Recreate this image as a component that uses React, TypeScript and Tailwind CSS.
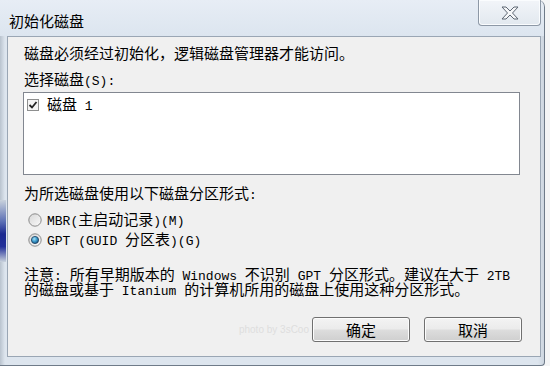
import React from "react";

function T({ s }: { s: string }) {
  const parts = s.split(/([\x20-\x7e]+)/);
  return (
    <>
      {parts.map((p, i) =>
        p === "" ? null : /^[\x20-\x7e]+$/.test(p) ? (
          <span key={i} className="font-['Liberation_Mono',monospace] text-[13px] whitespace-pre">
            {p}
          </span>
        ) : (
          <span key={i}>{p}</span>
        )
      )}
    </>
  );
}

function Radio({ checked }: { checked?: boolean }) {
  return (
    <svg width="14" height="14" viewBox="0 0 14 14">
      <defs>
        <linearGradient id={checked ? "rg1" : "rg0"} x1="0" y1="0" x2="1" y2="1">
          <stop offset="0" stopColor="#d6d6d6" />
          <stop offset="1" stopColor="#fbfbfb" />
        </linearGradient>
        <radialGradient id="dot" cx="0.4" cy="0.35" r="0.7">
          <stop offset="0" stopColor="#a8e2f8" />
          <stop offset="0.5" stopColor="#3d9ccc" />
          <stop offset="1" stopColor="#16507e" />
        </radialGradient>
      </defs>
      <circle cx="7" cy="7" r="6.2" fill={`url(#${checked ? "rg1" : "rg0"})`} stroke="#8b8b8b" strokeWidth="1" />
      {checked && <circle cx="7" cy="7" r="3.6" fill="url(#dot)" stroke="#1d3f5e" strokeWidth="0.8" />}
    </svg>
  );
}

function Btn({ label }: { label: string }) {
  return (
    <div className="w-[98px] h-[25px] rounded-[3px] border border-[#707070] bg-[linear-gradient(#f3f3f3_0%,#ebebeb_48%,#dddddd_52%,#cfcfcf_100%)] shadow-[inset_0_0_0_1px_#fcfcfc] flex items-center justify-center text-[15px] leading-none text-black">
      {label}
    </div>
  );
}

export default function App() {
  return (
    <div className="w-[550px] h-[366px] bg-[#f4f5f6] overflow-hidden font-['Noto_Sans_CJK_SC',sans-serif] text-black">
      <div className="relative w-[545px] h-[366px] rounded-tr-[7px] rounded-br-[4px] border-r border-b border-[#6f7b89] bg-[linear-gradient(90deg,#b9c3ce_0px,#dde5ee_5px,#dde5ee_538px,#c9d2dc_545px)] flex flex-col">
        {/* left glass blob */}
        <div className="absolute left-0 top-[200px] w-[6px] h-[62px] bg-[linear-gradient(#c9d2dc_0%,#5b6fb5_35%,#1a2890_55%,#22309a_75%,#c9d2dc_100%)]" />
        {/* title bar */}
        <div className="h-[36px] flex items-center pl-[9px] bg-[linear-gradient(#e7edf5,#dce5ef)] rounded-tr-[7px]">
          <span className="text-[15px] leading-[16px] mt-[5px]">初始化磁盘</span>
        </div>
        {/* close button */}
        <div className="absolute top-0 right-[3px] w-[63px] h-[26px] rounded-b-[4px] border border-t-0 border-[#8d98a6] bg-[linear-gradient(#f2f5f9,#e2e8ef)] shadow-[inset_0_0_0_1px_#fafcfe] flex items-center justify-center">
          <svg width="18" height="14" viewBox="0 0 18 14">
            <polygon
              points="1,1 5,1 9,5 13,1 17,1 11.5,7 17,13 13,13 9,9 5,13 1,13 6.5,7"
              fill="#f6f7f9"
              stroke="#5d6672"
              strokeWidth="1"
              strokeLinejoin="round"
            />
          </svg>
        </div>
        {/* client area */}
        <div className="ml-[7px] w-[534px] h-[321px] border border-[#9aa6b4] bg-[#f0f0f0] flex flex-col pl-[15px] pt-[8px]">
          <div className="pl-[1px] h-[16px] leading-[16px] text-[15px]">
            <T s="磁盘必须经过初始化，逻辑磁盘管理器才能访问。" />
          </div>
          <div className="pl-[1px] mt-[10px] h-[16px] leading-[16px] text-[15px]">
            <T s="选择磁盘(S):" />
          </div>
          <div className="mt-[5px] w-[497px] h-[83px] border border-[#828790] bg-white pt-[4px] pl-[3px]">
            <div className="flex items-center h-[16px]">
              <svg width="12" height="12" viewBox="0 0 12 12">
                <rect x="0.5" y="0.5" width="11" height="11" fill="#f4f4f4" stroke="#8e8f8f" />
                <path d="M2.5 6 L5 8.5 L9.5 3" fill="none" stroke="#222" strokeWidth="1.8" />
              </svg>
              <span className="ml-[8px] text-[15px] leading-[16px]">
                <T s="磁盘 1" />
              </span>
            </div>
          </div>
          <div className="pl-[1px] mt-[10px] h-[16px] leading-[16px] text-[15px]">
            <T s="为所选磁盘使用以下磁盘分区形式:" />
          </div>
          <div className="mt-[9px] flex flex-col pl-[5px]">
            <div className="h-[20px] flex items-center">
              <Radio />
              <span className="ml-[5px] text-[15px] leading-[16px]">
                <T s="MBR(主启动记录)(M)" />
              </span>
            </div>
            <div className="h-[20px] flex items-center">
              <Radio checked />
              <span className="ml-[5px] text-[15px] leading-[16px]">
                <T s="GPT (GUID 分区表)(G)" />
              </span>
            </div>
          </div>
          <div className="pl-[1px] mt-[16px] text-[15px]">
            <div className="h-[15px] leading-[15px] whitespace-nowrap">
              <T s="注意: 所有早期版本的 Windows 不识别 GPT 分区形式。建议在大于 2TB" />
            </div>
            <div className="h-[15px] leading-[15px] whitespace-nowrap">
              <T s="的磁盘或基于 Itanium 的计算机所用的磁盘上使用这种分区形式。" />
            </div>
          </div>
          <div className="mt-[21px] pr-[18px] flex items-center justify-end">
            <span className="mr-[3px] text-[10px] text-[#dedede] font-['Liberation_Sans',sans-serif]">photo by 3sCoo</span>
            <Btn label="确定" />
            <div className="w-[14px]" />
            <Btn label="取消" />
          </div>
        </div>
      </div>
    </div>
  );
}
